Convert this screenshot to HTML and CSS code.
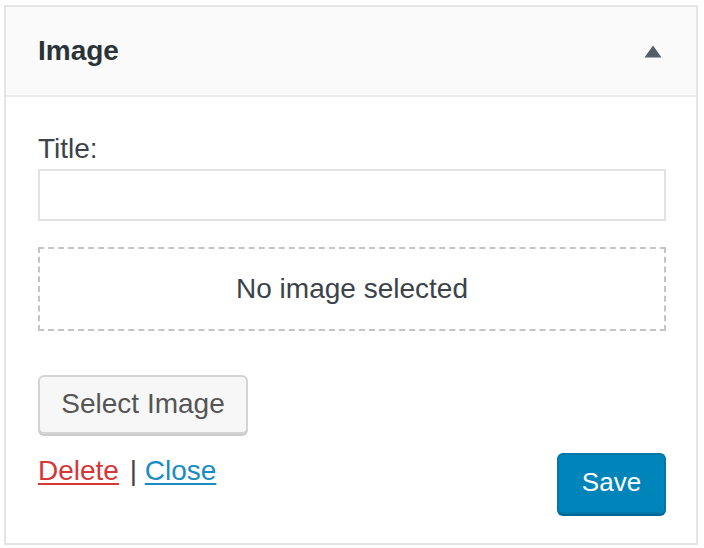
FILE: index.html
```html
<!DOCTYPE html>
<html>
<head>
<meta charset="utf-8">
<link rel="stylesheet" href="styles.css">
</head>
<body>
<div class="widget">
  <div class="widget-head">
    <h2 class="widget-title">Image</h2>
    <svg class="toggle" width="18" height="13" viewBox="0 0 18 13"><polygon points="9,0.5 17.5,12.5 0.5,12.5" fill="#555d66"/></svg>
  </div>
  <div class="widget-body">
    <label class="field-label" for="title">Title:</label>
    <input class="field-input" id="title" type="text">
    <div class="placeholder">No image selected</div>
    <button class="btn">Select Image</button>
    <div class="actions">
      <div class="links"><a class="link-delete" href="#">Delete</a> <span class="sep">|</span> <a class="link-close" href="#">Close</a></div>
      <button class="btn-primary">Save</button>
    </div>
  </div>
</div>
</body>
</html>
```
FILE: styles.css
```css
html, body {
  margin: 0;
  background: #fff;
}
body {
  padding: 5px 6px 0 4px;
  font-family: "Liberation Sans", Arial, sans-serif;
  color: #444;
}
.widget {
  border: 2px solid #e5e5e5;
  background: #fff;
}
.widget-head {
  height: 88px;
  display: flex;
  align-items: center;
  justify-content: space-between;
  padding: 0 34px 0 32px;
  background: #fafafa;
  border-bottom: 2px solid #ebebeb;
}
.widget-title {
  margin: 0;
  font-size: 28px;
  font-weight: bold;
  color: #2c3338;
  line-height: 32px;
}
.toggle {
  display: block;
}
.widget-body {
  display: flex;
  flex-direction: column;
  align-items: flex-start;
  padding: 36px 30px 29px 32px;
}
.field-label {
  font-size: 28px;
  line-height: 32px;
  color: #3c434a;
}
.field-input {
  box-sizing: border-box;
  width: 100%;
  height: 52px;
  margin: 4px 0 0;
  border: 2px solid #e2e2e2;
  background: #fff;
  font: inherit;
}
.placeholder {
  box-sizing: border-box;
  width: 100%;
  height: 84px;
  margin-top: 26px;
  border: 2px dashed #c3c4c7;
  display: flex;
  align-items: center;
  justify-content: center;
  font-size: 28px;
  color: #3c434a;
}
.btn {
  box-sizing: border-box;
  width: 210px;
  height: 59px;
  margin-top: 44px;
  padding: 0 0 2px;
  border: 2px solid #d4d4d4;
  border-radius: 6px;
  background: #f7f7f7;
  box-shadow: 0 2px 0 #ccc;
  font-family: "Liberation Sans", Arial, sans-serif;
  font-size: 28px;
  color: #555;
}
.actions {
  width: 100%;
  margin-top: 19px;
  display: flex;
  justify-content: space-between;
  align-items: flex-start;
}
.links {
  font-size: 28px;
  line-height: 32px;
  color: #555;
  padding-top: 2px;
}
.links a {
  text-decoration: underline;
  text-decoration-thickness: 2px;
  text-underline-offset: 3px;
}
.link-delete { color: #d63638; }
.link-close { color: #1a8cc4; }
.sep {
  color: #444;
  margin-left: 3px;
}
.btn-primary {
  box-sizing: border-box;
  width: 109px;
  height: 61px;
  border: 2px solid #0078aa;
  border-radius: 6px;
  background: #0085ba;
  box-shadow: 0 2px 0 #006799;
  color: #fff;
  font-family: "Liberation Sans", Arial, sans-serif;
  font-size: 26px;
  padding: 0 0 2px;
}
```
